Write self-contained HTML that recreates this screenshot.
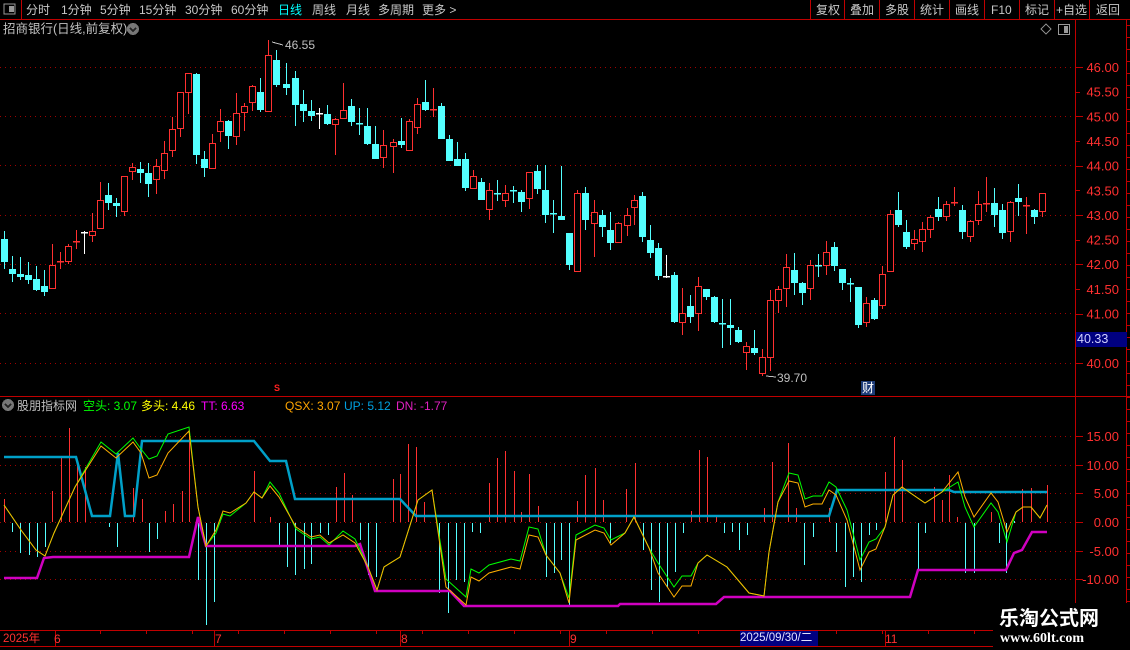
<!DOCTYPE html>
<html><head><meta charset="utf-8"><style>
*{margin:0;padding:0}
body{width:1130px;height:650px;background:#000;overflow:hidden;position:relative;font-family:"Liberation Sans","Noto Sans CJK SC",sans-serif;}
.t{position:absolute;white-space:nowrap;font-size:12px;line-height:14px}
</style></head><body>
<svg id="s" width="1130" height="650" style="position:absolute;left:0;top:0" shape-rendering="crispEdges"></svg>
<div class="t" style="left:26px;top:3px;color:#c8c8c8;word-spacing:0">分时</div>
<div class="t" style="left:61px;top:3px;color:#c8c8c8">1分钟</div>
<div class="t" style="left:100px;top:3px;color:#c8c8c8">5分钟</div>
<div class="t" style="left:139px;top:3px;color:#c8c8c8">15分钟</div>
<div class="t" style="left:185px;top:3px;color:#c8c8c8">30分钟</div>
<div class="t" style="left:231px;top:3px;color:#c8c8c8">60分钟</div>
<div class="t" style="left:278px;top:3px;color:#00ffff">日线</div>
<div class="t" style="left:312px;top:3px;color:#c8c8c8">周线</div>
<div class="t" style="left:346px;top:3px;color:#c8c8c8">月线</div>
<div class="t" style="left:378px;top:3px;color:#c8c8c8">多周期</div>
<div class="t" style="left:422px;top:3px;color:#c8c8c8">更多 &gt;</div>
<div class="t" style="left:816px;top:3px;color:#c8c8c8">复权</div>
<div class="t" style="left:850px;top:3px;color:#c8c8c8">叠加</div>
<div class="t" style="left:885px;top:3px;color:#c8c8c8">多股</div>
<div class="t" style="left:920px;top:3px;color:#c8c8c8">统计</div>
<div class="t" style="left:955px;top:3px;color:#c8c8c8">画线</div>
<div class="t" style="left:991px;top:3px;color:#c8c8c8">F10</div>
<div class="t" style="left:1025px;top:3px;color:#c8c8c8">标记</div>
<div class="t" style="left:1056px;top:3px;color:#c8c8c8">+自选</div>
<div class="t" style="left:1096px;top:3px;color:#c8c8c8">返回</div>
<div class="t" style="left:3px;top:22px;color:#c0c0c0;font-size:12.5px">招商银行(日线,前复权)</div>
<div class="t" style="left:17px;top:399px;color:#c0c0c0">股朋指标网</div>
<div class="t" style="left:83px;top:399px;color:#00ff00">空头: 3.07</div>
<div class="t" style="left:141px;top:399px;color:#ffff00">多头: 4.46</div>
<div class="t" style="left:201px;top:399px;color:#ff00ff">TT: 6.63</div>
<div class="t" style="left:285px;top:399px;color:#ffa500">QSX: 3.07</div>
<div class="t" style="left:344px;top:399px;color:#00a0e0">UP: 5.12</div>
<div class="t" style="left:396px;top:399px;color:#e020c0">DN: -1.77</div>
<div class="t" style="left:285px;top:38px;color:#c0c0c0">46.55</div>
<div class="t" style="left:777px;top:371px;color:#c0c0c0">39.70</div>
<div class="t" style="left:861px;top:381px;color:#fff;background:#1e3c78;padding:0 1px">财</div>
<div class="t" style="left:3px;top:632px;color:#ff3030;font-size:11.5px">2025年</div>
<div class="t" style="left:54px;top:632px;color:#ff3030">6</div>
<div class="t" style="left:215px;top:632px;color:#ff3030">7</div>
<div class="t" style="left:401px;top:632px;color:#ff3030">8</div>
<div class="t" style="left:570px;top:632px;color:#ff3030">9</div>
<div class="t" style="left:740px;top:631px;width:78px;height:15px;background:#000080;color:#e0e0ff;font-size:11.5px">2025/09/30/二</div>
<div class="t" style="left:885px;top:632px;color:#ff3030">11</div>
<div class="t" style="left:1076px;top:332px;width:50px;height:15px;background:#000080;color:#d0d0ff;font-size:12.5px;padding-left:1px">40.33</div>
<div style="position:absolute;left:993px;top:603px;width:137px;height:47px;background:#000"></div>
<div class="t" style="left:999px;top:607px;color:#fff;font-size:20px;line-height:24px;font-weight:bold">乐淘公式网</div>
<div class="t" style="left:1000px;top:632px;color:#fff;font-size:14px;font-family:'Liberation Serif',serif;font-weight:bold">www.60lt.com</div>
<script>
var s=document.getElementById('s'),h='';
function L(x1,y1,x2,y2,c,w,extra){h+='<line x1="'+x1+'" y1="'+y1+'" x2="'+x2+'" y2="'+y2+'" stroke="'+c+'" stroke-width="'+(w||1)+'" '+(extra||'')+'/>';}
function R(x,y,w,hh,f,st){h+='<rect x="'+x+'" y="'+y+'" width="'+w+'" height="'+hh+'" fill="'+f+'" '+(st?'stroke="'+st+'" stroke-width="1.3"':'')+'/>';}
function P(pts,c,w){h+='<polyline fill="none" stroke="'+c+'" stroke-width="'+w+'" shape-rendering="auto" points="'+pts.map(function(p){return p.join(',')}).join(' ')+'"/>';}
var RED='#ff3030',CY='#54ffff',DOT='stroke-dasharray="1,4"';
L(0,19.5,1130,19.5,'#c00000');
L(21.5,0,21.5,19,'#c00000');
[810,844,879,914,949,984,1019,1054,1089].forEach(function(x){L(x+.5,0,x+.5,19,'#c00000')});
R(4,4,11,10,'none','#999');R(9,6,5,6,'#999');
L(1075.5,20,1075.5,650,'#c00000');L(1126.5,20,1126.5,650,'#c00000');
L(0,396.5,1075,396.5,'#c00000');L(1075,396.5,1130,396.5,'#c00000');
L(0,630.5,1075,630.5,'#c00000');L(0,646.5,1075,646.5,'#c00000');
[55,214,400,569,885].forEach(function(x){L(x+.5,631,x+.5,646,'#c00000')});
for(var x=100;x<1075;x+=46){L(x+.5,631,x+.5,634,'#c00000')}
h+='<circle cx="133" cy="29" r="6" fill="#777"/><path d="M130 28 L133 31 L136 28" stroke="#222" stroke-width="1.5" fill="none"/>';
h+='<circle cx="8" cy="405" r="6" fill="#777"/><path d="M5 404 L8 407 L11 404" stroke="#222" stroke-width="1.5" fill="none"/>';
h+='<path d="M1046 24 L1051 29 L1046 34 L1041 29Z" fill="none" stroke="#888"/>';
R(1058.5,24.5,11,10,'none','#999');R(1064,26,4,7,'#999');
var gy=[67,116,165,215,264,313,363],gl=['46.00','45.50','45.00','44.50','44.00','43.50','43.00','42.50','42.00','41.50','41.00','40.50','40.00'];
gy.forEach(function(y){L(0,y+.5,1075,y+.5,'#a00000',1,DOT)});
for(var i=0;i<13;i++){var y=67+i*24.65;L(1075,Math.round(y)+.5,i%2?1080:1083,Math.round(y)+.5,'#c00000');
 if(gl[i]!='40.50')h+='<text x="1119" y="'+(y+5)+'" fill="#ff3030" font-size="13" text-anchor="end" font-family="Liberation Sans">'+gl[i]+'</text>';}
for(var y=25;y<640;y+=12){L(1126,y+.5,1130,y+.5,'#c00000')}
var ly=[436,465,493,522,551,579],ll=['15.00','10.00','5.00','0.00','-5.00','-10.00'];
ly.forEach(function(y,i){L(0,y+.5,1075,y+.5,'#a00000',1,DOT);L(1075,y+.5,1083,y+.5,'#c00000');
 h+='<text x="1119" y="'+(y+5)+'" fill="#ff3030" font-size="13" text-anchor="end" font-family="Liberation Sans">'+ll[i]+'</text>';});
var C=[[4,239,262,'c',231,269],[12,269,274,'c',256,282],[20,274,277,'c',257,280],[28,275,280,'c',262,284],[36,279,290,'c',266,291],[44,286,292,'c',270,296],[52,265,289,'r',244,289],[60,261,263,'r',252,269],[68,246,262,'r',244,264],[76,241,243,'r',230,249],[84,232,234,'w',231,254],[92,231,236,'r',213,242],[100,200,229,'r',182,229],[108,195,203,'c',183,210],[116,203,206,'c',198,217],[124,176,212,'r',176,216],[132,167,172,'r',163,180],[140,169,173,'c',162,183],[148,173,184,'c',163,197],[156,166,180,'r',159,194],[164,153,171,'r',141,179],[172,129,151,'r',117,157],[180,92,129,'r',92,137],[188,73,93,'r',73,114],[196,74,155,'c',73,164],[204,159,168,'c',151,177],[212,143,169,'r',134,169],[220,121,132,'r',109,142],[228,121,136,'c',120,149],[236,113,137,'r',93,145],[244,106,113,'r',103,131],[252,86,103,'r',85,111],[260,92,110,'c',78,112],[268,55,112,'r',40,112],[276,60,85,'c',50,87],
[286,84,88,'c',63,95],[295,78,105,'c',71,126],[303,104,111,'c',90,122],[311,111,116,'c',100,121],[319,113,115,'w',108,129],[327,114,124,'c',105,125],[335,119,125,'r',118,155],[343,110,119,'r',83,119],[351,106,122,'c',99,126],[359,123,125,'c',108,135],[367,126,144,'c',108,145],[375,144,159,'c',126,159],[383,145,158,'r',130,168],[393,142,147,'r',139,173],[401,141,145,'c',118,148],[409,121,151,'r',119,151],[417,104,128,'r',98,134],[425,102,110,'c',80,111],[433,109,111,'r',88,117],[441,106,139,'c',103,139],[449,139,161,'c',135,161],[457,159,166,'c',142,166],[465,159,188,'c',153,191],[473,176,189,'r',170,189],[481,182,200,'c',178,200],[489,190,210,'r',183,220],[497,193,195,'c',180,201],[505,193,201,'r',185,207],[513,190,192,'c',186,203],[521,192,202,'c',190,212],[529,172,199,'r',172,209],[537,171,189,'c',165,194],[545,190,215,'c',165,223],[553,213,215,'c',200,233],[561,216,220,'c',166,220],[569,233,265,'c',233,270],[577,193,272,'r',190,272],[585,193,220,'c',187,230],[594,212,224,'r',200,257],[602,215,227,'c',210,237],[610,230,243,'c',212,250],[618,223,243,'r',222,243],[627,215,226,'r',208,236],[634,200,208,'r',195,225],[642,196,237,'c',192,242],[650,240,253,'c',225,258],[658,248,276,'c',243,280],
[666,276,278,'w',255,278],[674,275,322,'c',272,323],[682,313,323,'r',288,335],[690,306,317,'c',295,323],[698,286,314,'r',277,331],[706,289,297,'c',296,300],[714,297,322,'c',296,323],[722,323,324,'c',299,348],[730,325,328,'c',299,345],[738,330,342,'c',327,343],[746,346,353,'r',342,370],[754,348,353,'c',330,355],[762,357,374,'r',349,376],[770,300,358,'r',290,371],[778,289,301,'r',286,313],[786,267,289,'r',254,307],[794,270,283,'c',253,295],[802,283,293,'c',282,305],[810,265,289,'r',260,300],[818,265,266,'c',254,277],[826,252,266,'r',241,275],[834,247,266,'c',242,271],[842,269,283,'c',269,290],[850,283,284,'c',278,302],[858,287,325,'c',287,328],[866,303,323,'r',297,327],[874,300,319,'c',298,320],[882,274,306,'r',266,309],[890,214,272,'r',210,272],[898,210,225,'c',192,227],[906,232,247,'c',220,249],[914,239,244,'r',230,250],[922,229,242,'r',222,252],[930,217,230,'r',215,238],[938,209,217,'c',197,221],[946,204,217,'r',201,221],[954,202,204,'r',187,206],[962,210,232,'c',205,239],[970,221,237,'r',220,242],[978,204,221,'r',191,225],[986,203,205,'r',177,212],[994,203,215,'c',188,227],[1002,210,233,'c',204,239],[1010,202,232,'r',201,242],[1018,198,202,'c',184,216],[1026,205,207,'r',197,234],[1034,210,217,'c',209,224],[1042,193,212,'r',193,217]];
C.forEach(function(c){var x=c[0],col=c[3]=='r'?RED:c[3]=='w'?'#fff':CY;
 L(x+.5,c[4],x+.5,c[5],col);
 if(c[2]-c[1]<=2){L(x-3,c[1]+.5,x+4,c[1]+.5,col,1.5);}
 else if(c[3]=='r'){R(x-2.5,c[1]+.5,6,c[2]-c[1]-1,'#000',RED);}
 else R(x-3,c[1],7,c[2]-c[1],col);});
L(272,42,283,45,'#c0c0c0');L(766,376,776,377,'#c0c0c0');
h+='<text x="274" y="391" fill="#ff2020" font-size="9" font-weight="bold" font-family="Liberation Sans">S</text>';
var HR=[[4,499],[52,491],[61,458],[69,428],[77,462],[85,467],[133,488],[142,499],[165,511],[173,504],[182,491],[189,431],[254,471],[270,517],[336,487],[344,473],[352,495],[393,479],[400,474],[408,444],[416,447],[424,502],[489,483],[497,458],[505,451],[514,471],[521,512],[529,474],[538,506],[577,501],[585,475],[595,468],[603,500],[626,489],[635,463],[691,511],[699,450],[707,457],[716,517],[764,508],[772,462],[788,443],[796,508],[829,508],[885,472],[894,437],[902,460],[934,487],[942,500],[949,475],[957,517],[991,512],[1022,489],[1031,488],[1047,485]];
HR.forEach(function(b){L(b[0]+.5,b[1],b[0]+.5,522,RED,1.3)});
var HC=[[12,532],[20,553],[29,555],[37,557],[45,547],[109,527],[117,547],[149,552],[157,539],[198,580],[206,625],[214,602],[222,523],[279,547],[287,567],[295,575],[304,569],[311,564],[320,533],[328,535],[360,540],[368,575],[376,577],[439,593],[448,613],[456,580],[464,582],[472,532],[480,533],[546,577],[554,573],[561,560],[569,607],[610,543],[643,550],[651,590],[659,602],[667,587],[675,572],[683,533],[724,533],[732,532],[739,550],[747,535],[804,565],[813,537],[836,552],[845,587],[853,577],[861,582],[869,535],[876,530],[918,570],[925,533],[965,573],[974,573],[982,523],[999,543],[1006,573],[1014,521]];
HC.forEach(function(b){L(b[0]+.5,523,b[0]+.5,b[1],CY,1.3)});
P([[4,457],[76,457],[92,516],[110,516],[118,453],[125,516],[134,516],[142,441],[254,441],[270,461],[286,461],[295,499],[400,499],[416,516],[829,516],[837,490],[949,490],[954,492],[1047,492]],'#00a0c8',2.5);
P([[4,578],[37,578],[44,558],[53,557],[189,557],[198,517],[206,546],[355,546],[360,544],[375,591],[450,591],[464,606],[618,606],[620,604],[716,604],[724,597],[910,597],[918,570],[1006,570],[1014,553],[1022,550],[1032,532],[1047,532]],'#d000c0',2.5);
var Y=[[4,505],[21,530],[36,550],[45,556],[54,533],[75,487],[101,446],[116,458],[133,442],[141,453],[149,478],[157,475],[168,453],[189,431],[198,507],[206,546],[216,530],[223,511],[230,513],[246,503],[254,492],[262,498],[270,486],[279,497],[296,527],[311,537],[320,535],[329,543],[343,535],[355,543],[368,567],[377,590],[384,567],[400,557],[418,500],[432,490],[446,587],[466,605],[471,577],[479,581],[489,573],[511,567],[520,569],[529,535],[538,537],[546,555],[560,573],[569,603],[576,540],[595,530],[604,533],[611,545],[625,533],[634,517],[649,548],[658,573],[674,597],[682,586],[691,586],[698,563],[707,555],[727,567],[749,593],[764,596],[769,552],[778,502],[789,481],[798,483],[805,507],[813,504],[822,504],[829,490],[836,495],[847,520],[860,570],[869,552],[876,549],[885,527],[893,495],[902,487],[909,492],[925,503],[942,492],[958,472],[965,497],[974,517],[991,493],[998,502],[1007,532],[1016,512],[1023,507],[1031,507],[1040,518],[1047,505]];
var G=Y.map(function(p){return [p[0],p[1]]});
function adj(a,b,d){G.forEach(function(p){if(p[0]>=a&&p[0]<=b)p[1]+=d;});}
adj(101,189,-4);adj(149,168,-15);adj(210,240,3);adj(270,360,-4);adj(296,330,6);adj(446,540,-8);adj(569,611,-5);adj(658,691,-10);adj(789,836,-8);adj(847,876,-10);adj(958,1007,10);
P(G,'#00ff00',1);
P(Y,'#ffb000',1);
s.innerHTML=h;
</script>
</body></html>
